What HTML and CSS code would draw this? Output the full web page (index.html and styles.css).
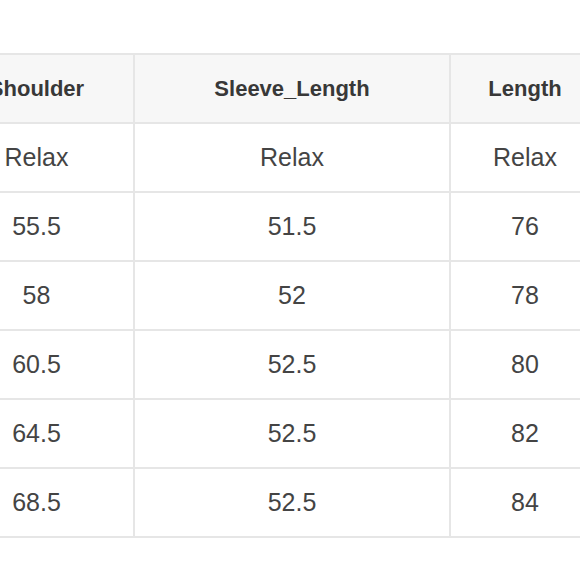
FILE: index.html
```html
<!DOCTYPE html>
<html>
<head>
<meta charset="utf-8">
<link rel="stylesheet" href="styles.css">
</head>
<body>
<div class="frame">
  <table class="size-table">
    <colgroup>
      <col class="c1">
      <col class="c2">
      <col class="c3">
    </colgroup>
    <thead>
      <tr><th>Shoulder</th><th>Sleeve_Length</th><th>Length</th></tr>
    </thead>
    <tbody>
      <tr><td>Relax</td><td>Relax</td><td>Relax</td></tr>
      <tr><td>55.5</td><td>51.5</td><td>76</td></tr>
      <tr><td>58</td><td>52</td><td>78</td></tr>
      <tr><td>60.5</td><td>52.5</td><td>80</td></tr>
      <tr><td>64.5</td><td>52.5</td><td>82</td></tr>
      <tr><td>68.5</td><td>52.5</td><td>84</td></tr>
    </tbody>
  </table>
</div>
</body>
</html>
```
FILE: styles.css
```css
html, body {
  margin: 0;
  padding: 0;
  background: #ffffff;
}

.frame {
  width: 580px;
  height: 580px;
  overflow: hidden;
  padding-top: 53px;
  box-sizing: border-box;
}

.size-table {
  border-collapse: collapse;
  table-layout: fixed;
  width: 661px;
  margin-left: -62px;
  font-family: "Liberation Sans", Arial, sans-serif;
  color: #444444;
}

.c1 { width: 195px; }
.c2 { width: 316px; }
.c3 { width: 150px; }

.size-table th,
.size-table td {
  border: 2px solid #e6e6e6;
  height: 67px;
  padding: 0;
  text-align: center;
  vertical-align: middle;
}

.size-table th {
  background: #f7f7f7;
  font-size: 22px;
  font-weight: bold;
  color: #383838;
}

.size-table td {
  font-size: 25px;
  font-weight: normal;
  background: #ffffff;
}
```
